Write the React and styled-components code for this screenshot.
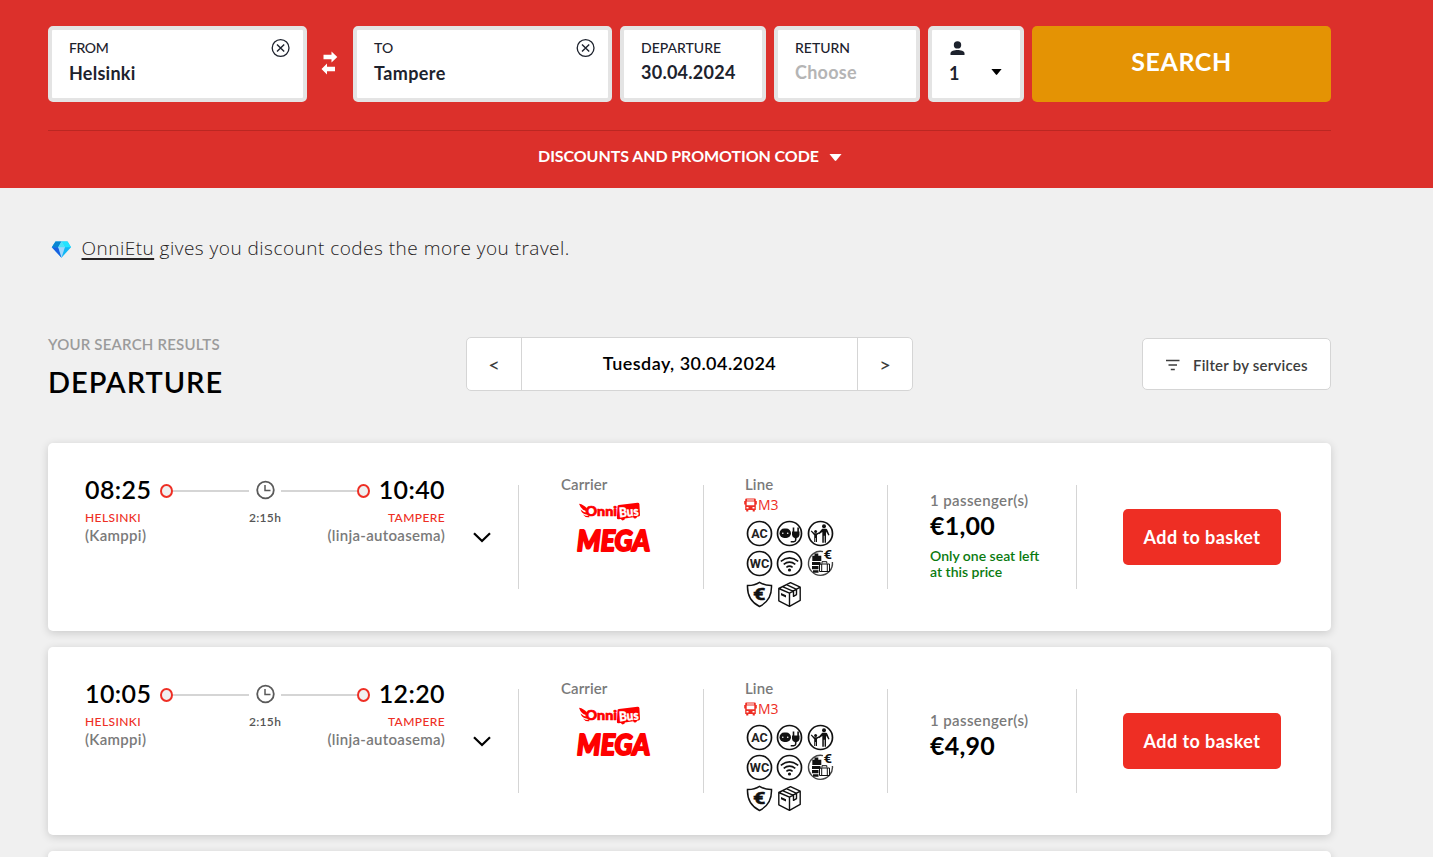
import React from "react";
import styled, { createGlobalStyle } from "styled-components";

const GlobalStyle = createGlobalStyle`
  * {
    box-sizing: border-box;
  }
  body {
    margin: 0;
    background: #f0f0f0;
    font-family: "Lato", "Open Sans", sans-serif;
    font-weight: 600;
    color: #000;
  }
  svg {
    display: block;
    flex-shrink: 0;
    overflow: visible;
  }
`;

const Page = styled.div`
  height: 857px;
  overflow: hidden;
`;

const Header = styled.header`
  height: 188px;
  padding: 26px 102px 0 48px;
  background: #dc302b;
`;

const SearchForm = styled.div`
  display: flex;
  gap: 8px;
  height: 76px;
`;

const Field = styled.div`
  display: flex;
  justify-content: space-between;
  width: ${(p) => p.$width}px;
  padding: 8px 13px 0 17px;
  border: 4px solid #e4e4e4;
  border-radius: 5px;
  background: #fff;
  color: #1d222d;
`;

const FieldLabel = styled.div`
  font-size: 14px;
  font-weight: 500;
  line-height: 20px;
  letter-spacing: ${(p) => p.$spacing || 0}px;
`;

const FieldValue = styled.div`
  margin-top: ${(p) => (p.$city ? 3 : 2)}px;
  font-size: 18px;
  font-weight: 700;
  line-height: 24px;
  letter-spacing: ${(p) => p.$spacing || 0.25}px;
  color: ${(p) => (p.$empty ? "#b5b5b5" : "inherit")};
`;

const Clear = styled.div`
  margin-top: 1px;
`;

const Swap = styled.div`
  display: flex;
  justify-content: center;
  align-items: center;
  width: 30px;
  padding: 0 2px 2px 0;
`;

const PassengerIcon = styled.div`
  height: 20px;
  padding-top: 3px;
`;

const PassengerCaret = styled.div`
  align-self: flex-start;
  padding: 31px 5px 0 0;
`;

const SearchButton = styled.button`
  width: 299px;
  padding: 0 0 6px;
  border: 0;
  border-radius: 5px;
  background: #e49304;
  color: #fff;
  font: 700 25px "Lato", sans-serif;
  letter-spacing: 0.6px;
`;

const Discounts = styled.div`
  display: flex;
  justify-content: center;
  align-items: center;
  gap: 10px;
  height: 50px;
  margin-top: 28px;
  padding-left: 1px;
  border-top: 1px solid #bb2722;
  color: #fff;
  font-size: 16px;
  font-weight: 700;
  letter-spacing: -0.08px;

  svg {
    margin-top: 4px;
  }
`;

const Main = styled.main`
  padding: 0 102px 0 48px;
`;

const Promo = styled.div`
  display: flex;
  align-items: center;
  gap: 9px;
  height: 30px;
  margin-top: 45px;
  padding: 0 0 0 3.5px;
  color: #262223;
  font-family: "Open Sans", sans-serif;
  font-size: 19px;
  font-weight: 300;
  line-height: 30px;
  letter-spacing: 0.48px;

  svg {
    margin: 3px 1px 0 -1px;
  }

  a {
    color: inherit;
    text-decoration: underline;
    text-decoration-thickness: 1.5px;
    text-underline-offset: 3px;
  }
`;

const ResultsHead = styled.div`
  display: grid;
  grid-template-columns: 418px 447px 1fr;
  align-items: start;
  height: 106px;
  margin-top: 74px;
`;

const Subtitle = styled.div`
  margin-top: -3px;
  color: #9b9b9b;
  font-size: 15px;
  line-height: 20px;
  letter-spacing: 0.2px;
`;

const Title = styled.h1`
  margin: 10px 0 0;
  font-size: 29px;
  font-weight: 600;
  line-height: 36px;
  letter-spacing: 0.95px;
`;

const DateSwitch = styled.div`
  display: grid;
  grid-template-columns: 54px 1fr 54px;
  height: 54px;
  border: 1px solid #d5d5d5;
  border-radius: 5px;
  background: #fff;
`;

const DateArrow = styled.button`
  padding: 0;
  border: 0;
  background: none;
  color: #3d3d3d;
  font: 500 20px "Lato", sans-serif;
`;

const CurrentDate = styled.div`
  border: solid #d5d5d5;
  border-width: 0 1px;
  font-size: 18px;
  font-weight: 600;
  line-height: 51px;
  letter-spacing: 0.45px;
  text-align: center;
`;

const FilterButton = styled.button`
  display: flex;
  align-items: center;
  justify-self: end;
  gap: 13px;
  width: 189px;
  height: 52px;
  margin-top: 1px;
  padding: 2px 0 0 23px;
  border: 1px solid #d5d5d5;
  border-radius: 5px;
  background: #fff;
  color: #3d3d3d;
  font: 600 15px "Lato", sans-serif;
  letter-spacing: 0.22px;
`;

const Card = styled.article`
  display: grid;
  grid-template-columns: 471px 185px 184px 189px 1fr;
  height: 188px;
  margin-bottom: 16px;
  padding: 42px 0;
  border-radius: 5px;
  background: #fff;
  box-shadow: 0 2px 8px rgba(0, 0, 0, 0.16);
`;

const Column = styled.section`
  height: 104px;
  padding-left: ${(p) => p.$pad}px;
  border-right: 1px solid #d5d5d5;
`;

const Trip = styled(Column)`
  display: flex;
  gap: 28px;
`;

const TripInfo = styled.div`
  width: 360px;
`;

const TimeRow = styled.div`
  display: grid;
  grid-template-columns: 75px 13px 76px 32px 76px 13px 75px;
  align-items: center;
  justify-items: center;
  height: 30px;
  margin-top: -10px;
`;

const Time = styled.div`
  justify-self: ${(p) => (p.$end ? "end" : "start")};
  margin-top: -2px;
  font-size: 25px;
  font-weight: 600;
  line-height: 30px;
  letter-spacing: 0.4px;
`;

const Stop = styled.i`
  width: 13px;
  height: 14px;
  margin-top: 2px;
  border: 2px solid #ee2e24;
  border-radius: 50%;
  background: #f0f0f0;
`;

const Track = styled.i`
  width: 100%;
  height: 2px;
  margin-top: 2px;
  background: #d5d5d5;
`;

const StopRow = styled.div`
  display: grid;
  grid-template-columns: 1fr 32px 1fr;
  margin-top: 5px;
`;

const StopName = styled.div`
  text-align: ${(p) => (p.$end ? "right" : "left")};
  color: #7a7a7a;
  font-size: 15px;
  line-height: 18px;
  letter-spacing: 0.3px;
  white-space: nowrap;
`;

const City = styled.div`
  color: #ee2e24;
  font-size: 12px;
  font-weight: 500;
  line-height: 16px;
  letter-spacing: 0.4px;
`;

const Duration = styled.div`
  color: #555;
  font-size: 12px;
  line-height: 16px;
  letter-spacing: 0.3px;
  text-align: center;
  white-space: nowrap;
`;

const Expand = styled.div`
  margin-top: 47px;
`;

const ColumnLabel = styled.div`
  height: 21px;
  margin-top: -11px;
  color: #7a7a7a;
  font-size: 15px;
  line-height: 20px;
  letter-spacing: 0.1px;
`;

const CarrierLogo = styled.div`
  margin: 8px 0 0 16px;
`;

const LineName = styled.div`
  display: flex;
  align-items: center;
  gap: 1px;
  height: 20px;
  margin-left: -1px;
  color: #ee2e24;
  font: 400 14px "Open Sans", sans-serif;
  line-height: 18px;
`;

const Services = styled.div`
  display: grid;
  grid-template-columns: repeat(3, 27px);
  gap: 3.5px;
  margin: 4.6px 0 0 0.5px;
`;

const PriceColumn = styled(Column)`
  display: flex;
  flex-direction: column;
  justify-content: center;
  padding-bottom: 6px;
`;

const Passengers = styled.div`
  color: #7a7a7a;
  font-size: 15px;
  line-height: 22px;
  letter-spacing: 0.38px;
`;

const Price = styled.div`
  margin-bottom: 8px;
  font-size: 25px;
  font-weight: 700;
  line-height: 28px;
  letter-spacing: 0.2px;
`;

const SeatNote = styled.div`
  width: 115px;
  padding-top: 1px;
  margin-bottom: -1px;
  color: #0a7a0f;
  font-size: 14px;
  line-height: 16px;
`;

const Action = styled.div`
  display: flex;
  align-items: center;
  padding-left: 46px;
`;

const BasketButton = styled.button`
  width: 158px;
  height: 56px;
  padding: 0 0 1px;
  border: 0;
  border-radius: 5px;
  background: #ee2e24;
  color: #fff;
  font: 700 18px "Lato", sans-serif;
  letter-spacing: 0.45px;
`;

function ClearIcon() {
  return (
    <svg width="18" height="18" viewBox="0 0 18 18" fill="none" stroke="#1d222d">
      <circle cx="8.6" cy="9" r="8.4" strokeWidth="1.3" />
      <path d="M5 5.400l7.200 7.200M12.200 5.400L5 12.600" strokeWidth="1.4" />
    </svg>
  );
}

function SwapIcon() {
  return (
    <svg width="17" height="24" viewBox="0 0 17 24" fill="#fff">
      <path d="M2.500 3.700h8V.6L16.300 6l-5.800 5.400V8.300h-8zM14 15.700H6v-3.100L.5 18 6 23.400v-3.100h8z" />
    </svg>
  );
}

function Caret({ width, height, color }) {
  return (
    <svg width={width} height={height} viewBox="0 0 12 6" fill={color} preserveAspectRatio="none">
      <path d="M.4 0h11.2L6.700 5.600q-.7.7-1.400 0z" />
    </svg>
  );
}

function PersonIcon() {
  return (
    <svg width="16" height="14" viewBox="0 0 16 14" fill="#1d222d">
      <circle cx="8.500" cy="3.900" r="3.700" />
      <path d="M1.500 14v-1.600c0-2.600 4-3.500 7-3.500s7 .9 7 3.500V14z" />
    </svg>
  );
}

function DiamondIcon() {
  return (
    <svg width="21" height="17" viewBox="0 0 21 17">
      <path d="M4.500.5h12L20 6.200 10.500 16.700.8 6.200z" fill="#12b7f5" />
      <path d="M4.500.5L.8 6.200h6.500l3.200-5.700z" fill="#0a86d1" />
      <path d="M16.500.5h-6l3.400 5.700H20z" fill="#22e4ff" />
      <path d="M.8 6.200h6.500l3.200 10.500z" fill="#1a5fe0" />
      <path d="M10.500.5L7.300 6.200l3.200 10.500 3.400-10.500z" fill="#9fd6fd" />
      <path d="M10.500.5L7.300 6.200h6.600z" fill="#4be3f8" />
    </svg>
  );
}

function FilterIcon() {
  return (
    <svg width="14" height="12" viewBox="0 0 14 12" stroke="#3d3d3d" strokeWidth="1.4">
      <path d="M0 1.500h13.500M2.500 6h8.500M4.800 10.500h4" />
    </svg>
  );
}

function ClockIcon() {
  return (
    <svg width="19" height="19" viewBox="0 0 19 19" fill="none" stroke="#5a5a5a">
      <circle cx="9.500" cy="9" r="8.300" strokeWidth="1.800" />
      <path d="M9 4v5.500h5.500" strokeWidth="1.500" />
    </svg>
  );
}

function ChevronIcon() {
  return (
    <svg width="18" height="11" viewBox="0 0 18 11" fill="none" stroke="#000" strokeWidth="2.200">
      <path d="M1 1.200l8 7.800 8-7.800" />
    </svg>
  );
}

function OnniBusLogo() {
  return (
    <svg width="78" height="52" viewBox="0 0 78 52" fill="#fe0000">
      <path d="M2 .8q5 .8 8 5l-.8 2.300Q4 7 2 .8zM3.500 6.500q3 3 6.500 3.200l.6 1.900Q5 11.300 3.500 6.500zM6 11.400q3 1.700 5.600 1.500l1.200 1.200Q8.500 15 6 11.400z" />
      <text x="8.500" y="13" fontFamily="Lato" fontSize="14" fontWeight="900" stroke="#fe0000" strokeWidth=".7" textLength="31.500" lengthAdjust="spacingAndGlyphs">
        Onni
      </text>
      <path d="M40.500 3.600q-.2-1.400 1.400-1.700L60.500-.3q1.700-.1 1.900 1.400l.6 10.900q0 1.400-1.500 1.600l-1.500.2a2 2 0 0 1-3.800.5l-8.300 1.100a2 2 0 0 1-3.900.6l-2.600.3q-1.500.1-1.500-1.400z" />
      <text x="42" y="13.300" fill="#fff" stroke="#fff" strokeWidth=".4" fontFamily="Lato" fontSize="13" fontWeight="900" textLength="19.500" lengthAdjust="spacingAndGlyphs" transform="rotate(-5 52 9)">
        Bus
      </text>
      <text x="0" y="48" fontFamily="Lato" fontSize="28" fontWeight="900" fontStyle="italic" stroke="#fe0000" strokeWidth="1.900" strokeLinejoin="round" textLength="73" lengthAdjust="spacingAndGlyphs">
        MEGA
      </text>
    </svg>
  );
}

function BusIcon() {
  return (
    <svg width="13" height="14" viewBox="0 0 13 14" fill="#ee2e24">
      <path
        fillRule="evenodd"
        d="M2.200.4h8.600q1 0 1 1V3h1v3.500h-1V12h-1v1.600H8.700V12H4.300v1.600H2.200V12h-1V6.500h-1V3h1V1.400q0-1 1-1zM3 1.600h7v.8H3zM2.700 3.400h7.600v3.800H2.700zM2.500 9h2v1.400h-2zM8.500 9h2v1.400h-2z"
      />
    </svg>
  );
}

function ServiceIcon({ plain, children }) {
  return (
    <svg width="27" height="27" viewBox="0 0 27 27" fill="none" stroke="#111" strokeWidth="1.500">
      {!plain && <circle cx="13.500" cy="13.500" r="12" strokeWidth="1.700" />}
      {children}
    </svg>
  );
}

function BadgeIcon({ label, width }) {
  return (
    <ServiceIcon>
      <text x="13.500" y="18" textAnchor="middle" fill="#222" stroke="none" fontFamily="Roboto" fontSize="13" fontWeight="700" textLength={width} lengthAdjust="spacingAndGlyphs">
        {label}
      </text>
    </ServiceIcon>
  );
}

function SocketIcon() {
  return (
    <ServiceIcon>
      <g fill="#111" stroke="none">
        <rect x="3.500" y="8.500" width="11.500" height="9.500" rx="4.700" />
        <path d="M16 11.500h7.500v3.500q-.5 3-3 3.300h-1.500q-2.700-.6-3-3.300z" />
        <path d="M16.700 7.500h1.600V12h-1.600zM21.300 7.500h1.600V12h-1.600z" />
      </g>
      <circle cx="6.800" cy="13.200" r=".8" fill="#fff" stroke="none" />
      <circle cx="11.700" cy="13.200" r=".8" fill="#fff" stroke="none" />
      <path d="M19.700 18v2.200q-.2 1.500-2 1.500h-3" />
    </ServiceIcon>
  );
}

function FamilyIcon() {
  return (
    <ServiceIcon>
      <g fill="#111" stroke="none">
        <circle cx="17" cy="6.200" r="2" />
        <path d="M15.200 8.700h3.800q.8.200 1.300 1.100l2.200 5.100-1.100.6-2.400-4V22.800h-1.400v-7h-.8v7h-1.500V12l-3.300 2.200-.7-.9z" />
        <circle cx="8.600" cy="11.600" r="1.500" />
        <path d="M4.500 10.500l3 2.800h2.200l2.400-1 .4.900-2.500 1.900V22H8.900v-4h-.6v4H7.200v-6.700L3.800 11.300z" />
      </g>
    </ServiceIcon>
  );
}

function WifiIcon() {
  return (
    <ServiceIcon>
      <path d="M4.800 11.400q8.700-7 17.400 0M7.700 14.400q5.800-4.600 11.600 0M10.400 17.300q3.100-2.300 6.200 0" strokeWidth="1.600" />
      <circle cx="13.500" cy="20" r="1.600" fill="#111" stroke="none" />
    </ServiceIcon>
  );
}

function LuggageIcon() {
  return (
    <ServiceIcon plain>
      <path d="M16 1.600A12 12 0 1 0 25.400 12" stroke="#444" strokeWidth="1.400" />
      <g fill="#111" stroke="none">
        <path d="M7.500 3.500h3.800v2.300h3V11h-9V5.800h2.200z" />
        <rect x="5" y="12" width="8.500" height="3" />
        <path d="M5 16h6.500v3.200H5zM6 20.300h5.500v2.500H6z" />
      </g>
      <path d="M12.500 14h10v7.500h-10zM15 13.500v-1.800h4.800v1.800M14.700 14v7.500M20.300 14v7.500" strokeWidth="1" />
      <text x="16.500" y="9" fill="#111" stroke="none" fontFamily="Roboto" fontSize="12.500" fontWeight="700" textLength="8.500" lengthAdjust="spacingAndGlyphs">
        €
      </text>
    </ServiceIcon>
  );
}

function ShieldIcon() {
  return (
    <ServiceIcon plain>
      <path d="M13.500 1.300q5 3.300 12 3.200.6 15-12 21Q.9 19.500 1.500 4.500 8.500 4.600 13.500 1.300z" strokeWidth="1.500" />
      <text x="13.200" y="19" textAnchor="middle" fill="#111" stroke="#111" strokeWidth=".5" fontFamily="Roboto" fontSize="17" fontWeight="700" textLength="12.500" lengthAdjust="spacingAndGlyphs">
        €
      </text>
    </ServiceIcon>
  );
}

function ParcelIcon() {
  return (
    <ServiceIcon plain>
      <path
        d="M2.800 7.500L14.500 1.700l9.700 4.500v13.200L13.500 25.300 2.800 19.800zM2.800 7.500l10.700 4.700 10.700-6M13.500 12.200v13M7 5.800l10.500 4.600v5l3-1.800V8.400L10.500 3.700"
        strokeWidth="1.400"
        strokeLinejoin="round"
      />
      <path d="M5 12l5 2.300v2.200l-5-2.300z" fill="#111" stroke="none" />
    </ServiceIcon>
  );
}

const connections = [
  { departs: "08:25", arrives: "10:40", price: "€1,00", note: "Only one seat left at this price" },
  { departs: "10:05", arrives: "12:20", price: "€4,90" },
];

function Connection({ departs, arrives, price, note }) {
  return (
    <Card>
      <Trip $pad={37}>
        <TripInfo>
          <TimeRow>
            <Time>{departs}</Time>
            <Stop />
            <Track />
            <ClockIcon />
            <Track />
            <Stop />
            <Time $end>{arrives}</Time>
          </TimeRow>
          <StopRow>
            <StopName>
              <City>HELSINKI</City>
              (Kamppi)
            </StopName>
            <Duration>2:15h</Duration>
            <StopName $end>
              <City>TAMPERE</City>
              (linja-autoasema)
            </StopName>
          </StopRow>
        </TripInfo>
        <Expand>
          <ChevronIcon />
        </Expand>
      </Trip>
      <Column $pad={42}>
        <ColumnLabel>Carrier</ColumnLabel>
        <CarrierLogo>
          <OnniBusLogo />
        </CarrierLogo>
      </Column>
      <Column $pad={41}>
        <ColumnLabel>Line</ColumnLabel>
        <LineName>
          <BusIcon />
          M3
        </LineName>
        <Services>
          <BadgeIcon label="AC" width={16.5} />
          <SocketIcon />
          <FamilyIcon />
          <BadgeIcon label="WC" width={19.5} />
          <WifiIcon />
          <LuggageIcon />
          <ShieldIcon />
          <ParcelIcon />
        </Services>
      </Column>
      <PriceColumn $pad={42}>
        <Passengers>1 passenger(s)</Passengers>
        <Price>{price}</Price>
        {note && <SeatNote>{note}</SeatNote>}
      </PriceColumn>
      <Action>
        <BasketButton>Add to basket</BasketButton>
      </Action>
    </Card>
  );
}

function App() {
  return (
    <Page>
      <GlobalStyle />
      <Header>
        <SearchForm>
          <Field $width={259}>
            <div>
              <FieldLabel $spacing={-0.4}>FROM</FieldLabel>
              <FieldValue $city>Helsinki</FieldValue>
            </div>
            <Clear>
              <ClearIcon />
            </Clear>
          </Field>
          <Swap>
            <SwapIcon />
          </Swap>
          <Field $width={259}>
            <div>
              <FieldLabel>TO</FieldLabel>
              <FieldValue $city $spacing={0.4}>
                Tampere
              </FieldValue>
            </div>
            <Clear>
              <ClearIcon />
            </Clear>
          </Field>
          <Field $width={146}>
            <div>
              <FieldLabel>DEPARTURE</FieldLabel>
              <FieldValue>30.04.2024</FieldValue>
            </div>
          </Field>
          <Field $width={146}>
            <div>
              <FieldLabel>RETURN</FieldLabel>
              <FieldValue $empty>Choose</FieldValue>
            </div>
          </Field>
          <Field $width={96}>
            <div>
              <PassengerIcon>
                <PersonIcon />
              </PassengerIcon>
              <FieldValue $city>1</FieldValue>
            </div>
            <PassengerCaret>
              <Caret width={11} height={6} color="#000" />
            </PassengerCaret>
          </Field>
          <SearchButton>SEARCH</SearchButton>
        </SearchForm>
        <Discounts>
          DISCOUNTS AND PROMOTION CODE
          <Caret width={13} height={7} color="#fff" />
        </Discounts>
      </Header>
      <Main>
        <Promo>
          <DiamondIcon />
          <span>
            <a>OnniEtu</a> gives you discount codes the more you travel.
          </span>
        </Promo>
        <ResultsHead>
          <div>
            <Subtitle>YOUR SEARCH RESULTS</Subtitle>
            <Title>DEPARTURE</Title>
          </div>
          <DateSwitch>
            <DateArrow>&lt;</DateArrow>
            <CurrentDate>Tuesday, 30.04.2024</CurrentDate>
            <DateArrow>&gt;</DateArrow>
          </DateSwitch>
          <FilterButton>
            <FilterIcon />
            Filter by services
          </FilterButton>
        </ResultsHead>
        {connections.map((c) => (
          <Connection key={c.departs} {...c} />
        ))}
        <Card />
      </Main>
    </Page>
  );
}

export default App;
